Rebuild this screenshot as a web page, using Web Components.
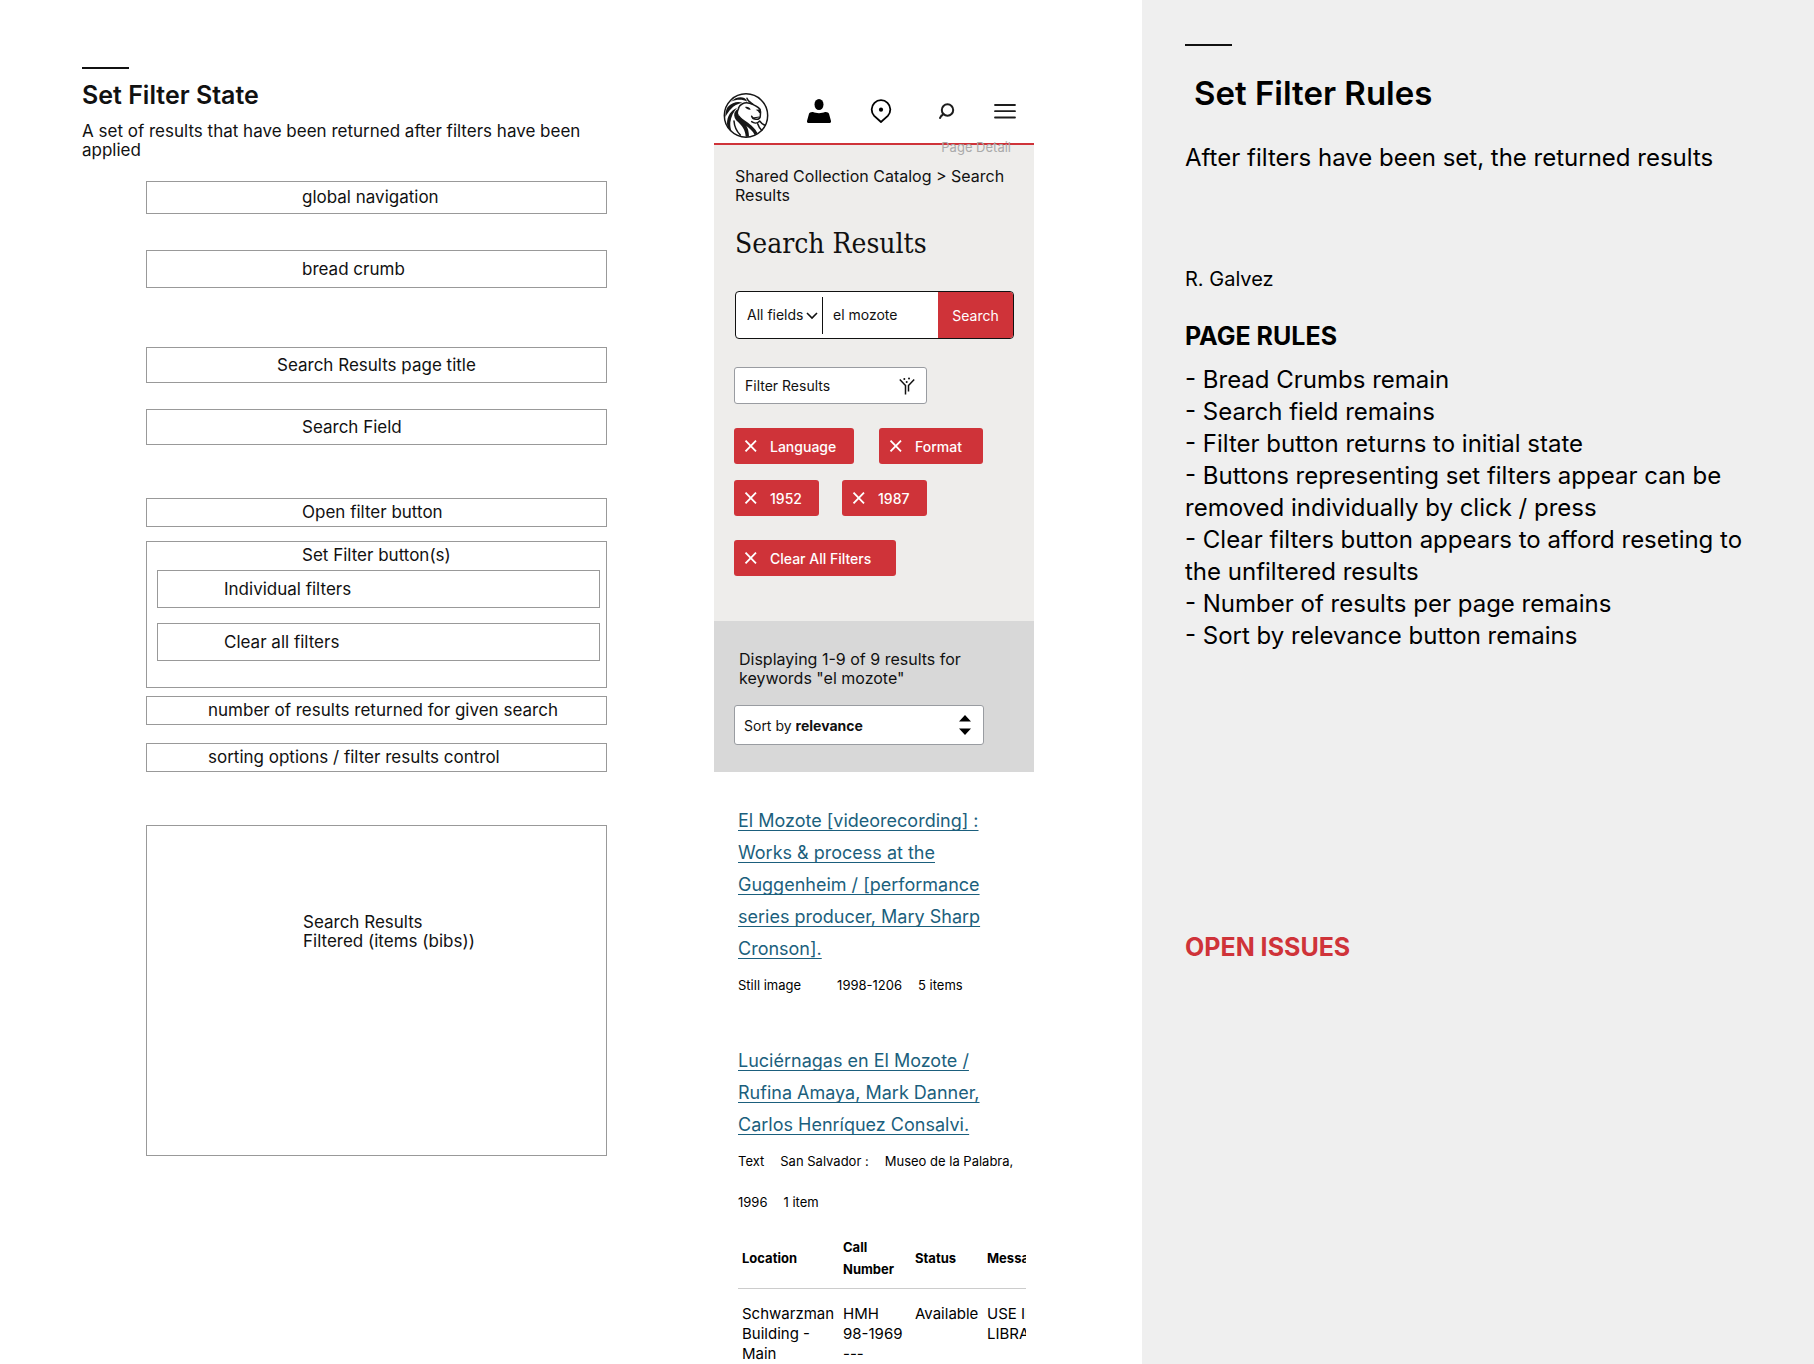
<!DOCTYPE html>
<html lang="en">
<head>
<meta charset="utf-8">
<title>Set Filter State</title>
<style>
html,body{margin:0;background:#fff}
body{font-family:Inter,"Liberation Sans",sans-serif;color:#111}
</style>
</head>
<body>
<spec-page>
  <state-panel>
    <span slot="title">Set Filter State</span>
    <span slot="intro">A set of results that have been returned after filters have been applied</span>
    <wire-box style="--h:33px;--gap:21px">global navigation</wire-box>
    <wire-box style="--h:38px;--gap:36px">bread crumb</wire-box>
    <wire-box style="--h:36px;--gap:59px;--indent:130px">Search Results page title</wire-box>
    <wire-box style="--h:36px;--gap:26px">Search Field</wire-box>
    <wire-box style="--h:29px;--gap:53px">Open filter button</wire-box>
    <wire-group>
      <span slot="label">Set Filter button(s)</span>
      <wire-box style="--h:38px;--gap:5px;--indent:66px">Individual filters</wire-box>
      <wire-box style="--h:38px;--gap:15px;--indent:66px">Clear all filters</wire-box>
    </wire-group>
    <wire-box style="--h:29px;--gap:8px;--indent:61px">number of results returned for given search</wire-box>
    <wire-box style="--h:29px;--gap:18px;--indent:61px">sorting options / filter results control</wire-box>
    <wire-box style="--h:331px;--gap:53px;--indent:156px;--align:flex-start;--top:87px">Search Results<br>Filtered (items (bibs))</wire-box>
  </state-panel>

  <phone-screen>
    <site-header></site-header>
    <search-hero></search-hero>
    <results-bar></results-bar>
    <result-list>
      <result-item>
        <span slot="title">El Mozote [videorecording] : Works &amp; process at the Guggenheim / [performance series producer, Mary Sharp Cronson].</span>
        <span slot="meta">Still image</span><span slot="meta" style="width:4px"></span><span slot="meta">1998-1206</span><span slot="meta">5 items</span>
      </result-item>
      <result-item>
        <span slot="title">Luciérnagas en El Mozote / Rufina Amaya, Mark Danner, Carlos Henríquez Consalvi.</span>
        <span slot="meta">Text</span><span slot="meta">San Salvador :</span><span slot="meta">Museo de la Palabra,</span><span slot="meta">1996</span><span slot="meta">1 item</span>
        <holdings-table></holdings-table>
      </result-item>
    </result-list>
  </phone-screen>

  <rules-panel></rules-panel>
</spec-page>

<script>
const define = (name, html) => {
  const t = document.createElement('template');
  t.innerHTML = '<style>*{box-sizing:border-box}:host{display:block;box-sizing:border-box}h1,h2,h3,p,ul{margin:0;padding:0}</style>' + html;
  customElements.define(name, class extends HTMLElement {
    constructor() {
      super();
      this.attachShadow({ mode: 'open' }).append(t.content.cloneNode(true));
    }
  });
};

define('spec-page', `
<style>
:host{display:grid;grid-template-columns:714fr 320px 108fr 672fr;min-height:100vh}
::slotted(rules-panel){grid-column:4}
</style><slot></slot>`);

define('state-panel', `
<style>
:host{padding:67px 107px 0 82px}
.rule{width:47px;height:2px;background:#111}
h1{font-size:25px;line-height:32px;font-weight:600;margin-top:10px}
p{font-size:17px;line-height:19px;margin-top:11px}
.boxes{margin-left:64px}
</style>
<div class="rule"></div>
<h1><slot name="title"></slot></h1>
<p><slot name="intro"></slot></p>
<div class="boxes"><slot></slot></div>`);

define('wire-box', `
<style>
:host{display:flex;align-items:var(--align,center);min-height:var(--h);margin-top:var(--gap);padding:var(--top,0) 0 0 var(--indent,155px);border:1px solid #999;font-size:17px;line-height:19px}
</style><div><slot></slot></div>`);

define('wire-group', `
<style>
:host{border:1px solid #999;margin-top:14px;padding:4px 6px 26px 10px;font-size:17px;line-height:19px}
.label{padding-left:145px}
</style><div class="label"><slot name="label"></slot></div><slot></slot>`);

define('phone-screen', `<style>:host{min-width:0;display:flex;flex-direction:column}</style><slot></slot>`);

define('site-header', `
<style>
:host{position:relative;border-bottom:2px solid #cf3339;padding:93px 17px 5px 9px}
header{display:flex;align-items:flex-start;gap:38px}
nav{flex:1;display:flex;justify-content:space-between;align-items:center;height:36px}
a{display:block;color:#000;height:24px}
.logo{height:45px}
svg{display:block}
.note{position:absolute;right:23px;bottom:-11px;font-size:13px;line-height:14px;color:#aaa}
</style>
<header>
<a class="logo" href="#" aria-label="Library home">
<svg width="46" height="45" viewBox="0 0 138 135" fill="none" stroke="#161616" stroke-linecap="round" stroke-linejoin="round">
<circle cx="69" cy="67.500" r="65" stroke-width="4.500"/>
<g fill="#161616" stroke="none">
<path d="M24 26C36 14 52 10 64 15C70 19 71 22 72 26C60 19 42 18 24 26Z"/>
<path d="M14 42C28 28 44 24 58 29C44 32 32 38 24 48C18 54 13 62 7 72C7 60 9 50 14 42Z"/>
<path d="M12 92C12 68 24 52 42 44C32 56 24 70 22 88C21 98 23 108 26 116C18 110 13 102 12 92Z"/>
<path d="M34 60C38 52 43 48 50 46C44 56 43 64 51 74C64 88 78 100 78 131L68 131C67 112 58 99 46 88C36 80 32 70 34 60Z"/>
<path d="M45 62C56 80 72 84 86 98C96 107 100 114 104 121L95 126C90 114 80 106 69 98C57 90 49 82 45 62Z"/>
<path d="M66 42C72 40 80 42 83 50C77 51 71 49 66 42Z"/>
<path d="M98 50L113 49L114 57L109 61L105 55Z"/>
</g>
<path d="M46 46C50 34 64 26 80 31C92 35 104 40 111 49C114 56 113 62 112 68C112 75 106 79 99 79C92 79 88 76 86 70" stroke-width="4.500"/>
<path d="M89 75L109 72" stroke-width="3.500"/>
<path d="M86 86C94 92 104 91 110 84C115 91 120 95 127 97" stroke-width="4.500"/>
<path d="M104 92C107 101 112 108 116 112M33 84C34 100 40 114 52 126" stroke-width="4.500"/>
<path d="M72 16C74 24 80 27 90 34" stroke-width="4.500"/>
</svg></a>
<nav>
<a href="#" aria-label="Account"><svg width="24" height="24" viewBox="0 0 24 24"><ellipse cx="12" cy="5.500" rx="4.500" ry="5.500"/><path d="M6 13C9 14.500 15 14.500 18 13C20 12.700 21.500 13.500 22 14.800L24 22C24.200 23.300 23.500 24 22.300 24H1.700C.5 24-.2 23.300 0 22L2 14.800C2.500 13.500 4 12.700 6 13Z"/></svg></a>
<a href="#" aria-label="Locations"><svg width="24" height="24" viewBox="0 0 24 24" fill="none" stroke="#000" stroke-width="1.800"><path d="M12 23L5.200 16.800A9.300 9.300 0 1 1 18.800 16.800Z"/><circle cx="12" cy="10.700" r="2.100" fill="#000" stroke="none"/></svg></a>
<a href="#" aria-label="Search"><svg width="24" height="24" viewBox="0 0 24 24" fill="none" stroke="#1d1d1d" stroke-width="2" stroke-linecap="round"><circle cx="16.500" cy="11" r="5.700"/><path d="M12.500 15L11 16.500H10.500L9 19"/></svg></a>
<a href="#" aria-label="Menu"><svg width="24" height="24" viewBox="0 0 24 24" stroke="#1d1d1d" stroke-width="1.800" stroke-linecap="round"><path d="M2 6H22M2 12.200H22M2 18.500H22"/></svg></a>
</nav>
</header>
<span class="note">Page Detail</span>`);

define('search-hero', `
<style>
:host{background:#eeedeb;padding:22px 20px 45px 20px}
.crumb{font-size:16px;line-height:19px;padding-left:1px;max-width:272px}
h2{font:400 28px/36px "DejaVu Serif Condensed","DejaVu Serif",serif;margin-top:21px;padding-left:1px}
form{display:flex;height:48px;margin:29px 0 0 1px;border:1px solid #111;border-radius:4px;background:#fff;overflow:hidden;font-size:14px}
.scope{flex:none;display:flex;align-items:center;width:87px;padding-left:11px;position:relative}
.scope::after{content:"";position:absolute;right:0;top:5px;bottom:4px;width:1px;background:#111}
select{appearance:none;border:0;background:none;font:inherit;color:inherit;width:100%;padding:0;margin:0}
.scope svg{position:absolute;right:5px;top:20px;pointer-events:none}
.scope select,input{padding-bottom:2px}
input{flex:1;min-width:0;border:0;background:none;padding:0 0 2px 10px;font:inherit;color:inherit}
button{font:inherit;cursor:pointer}
.go{width:75px;border:0;padding:0;background:#cf3339;color:#fff}
.filter{display:flex;align-items:center;justify-content:space-between;width:193px;height:37px;margin-top:28px;padding:0 11px 0 10px;border:1px solid #999ca1;border-radius:3px;background:#fff;color:#111;font-size:14px}
.chips{display:flex;flex-wrap:wrap;gap:16px 25px;margin-top:24px}
.chips.years{gap:23px;margin-top:16px}
</style>
<nav class="crumb" aria-label="Breadcrumb">Shared Collection Catalog &gt; Search Results</nav>
<h2>Search Results</h2>
<form onsubmit="return false">
<div class="scope"><select aria-label="Search scope"><option>All fields</option></select>
<svg width="12" height="8" viewBox="0 0 12 8" fill="none" stroke="#111" stroke-width="1.600"><path d="M1 1L6 6L11 1"/></svg></div>
<input type="text" value="el mozote" aria-label="Keywords">
<button class="go">Search</button>
</form>
<button class="filter">Filter Results
<svg width="16" height="18" viewBox="0 0 16 18" fill="none" stroke="#111" stroke-width="1.500"><path d="M.8 2.500L6.500 8.500V17.500M15.200 2.500L9.500 8.500V14.500"/><g fill="#111" stroke="none"><circle cx="5.300" cy="2" r="1"/><circle cx="10" cy="1.500" r="1"/><circle cx="7.700" cy="5" r="1"/></g></svg></button>
<div class="chips"><filter-chip style="--w:120px">Language</filter-chip><filter-chip style="--w:104px">Format</filter-chip></div>
<div class="chips years"><filter-chip style="--w:85px">1952</filter-chip><filter-chip style="--w:85px">1987</filter-chip></div>
<div class="chips"><filter-chip style="--w:162px">Clear All Filters</filter-chip></div>`);

define('filter-chip', `
<style>
button{display:flex;align-items:center;gap:13px;width:var(--w);height:36px;padding:0 0 0 10px;border:0;border-radius:3px;background:#cf3339;color:#fff;font:500 14px Inter,sans-serif;white-space:nowrap;cursor:pointer}
</style>
<button><svg width="13" height="12" viewBox="0 0 13 12" stroke="#fff" stroke-width="1.800"><path d="M1.500 .6L12 11.400M12 .6L1.500 11.400"/></svg><span><slot></slot></span></button>`);

define('results-bar', `
<style>
:host{background:#d8d8d8;padding:29px 50px 27px 20px}
p{font-size:16px;line-height:19px;padding-left:5px;max-width:260px}
.sort{display:flex;align-items:center;gap:4px;height:40px;margin-top:17px;padding-left:9px;border:1px solid #999ca1;border-radius:3px;background:#fff;font-size:14px;position:relative}
select{flex:1;appearance:none;border:0;background:none;font:inherit;font-weight:700;color:inherit;padding:0;margin:0}
svg{position:absolute;right:12px;top:9px;pointer-events:none}
</style>
<p>Displaying 1-9 of 9 results for keywords "el mozote"</p>
<div class="sort"><label for="sort">Sort by</label><select id="sort"><option>relevance</option></select>
<svg width="12" height="20" viewBox="0 0 12 20"><path d="M0 6.500L6 0L12 6.500ZM0 13.500L6 20L12 13.500Z"/></svg></div>`);

define('result-list', `<style>:host{display:flex;flex-direction:column;gap:39px;padding:33px 8px 0 24px}</style><slot></slot>`);

define('result-item', `
<style>
h3{font-size:18px;line-height:32px;font-weight:400;max-width:256px}
a{color:#1b5f7d;text-decoration:underline;text-decoration-thickness:1px;text-underline-offset:3px;text-decoration-skip-ink:none}
.meta{display:flex;flex-wrap:wrap;column-gap:16px;font-size:13px;line-height:41px;color:#000}
</style>
<h3><a href="#"><slot name="title"></slot></a></h3>
<div class="meta"><slot name="meta"></slot></div>
<slot></slot>`);

define('holdings-table', `
<style>
:host{overflow:hidden;margin-top:5px;color:#000}
table{table-layout:fixed;width:345px;border-collapse:collapse;text-align:left}
th{font-size:13px;line-height:22px;font-weight:700;padding:8px 0 8px 4px;border-bottom:1px solid #ccc}
td{font-size:15px;line-height:20px;vertical-align:top;padding:15px 0 0 4px}
</style>
<table>
<colgroup><col style="width:101px"><col style="width:72px"><col style="width:72px"><col></colgroup>
<thead><tr><th>Location</th><th>Call Number</th><th>Status</th><th>Message</th></tr></thead>
<tbody><tr><td>Schwarzman Building - Main</td><td>HMH<br>98-1969<br>---</td><td>Available</td><td>USE IN LIBRARY</td></tr></tbody>
</table>`);

define('rules-panel', `
<style>
:host{background:#efefef;padding:44px 43px 0;color:#000}
.rule{width:47px;height:2px;background:#111}
h1{font-size:33px;line-height:40px;font-weight:600;margin-top:27px;padding-left:9px}
.lead{font-size:24px;line-height:32px;margin-top:29px}
.author{font-size:20px;line-height:24px;margin-top:93px}
h2{font-size:25px;line-height:32px;font-weight:700;margin-top:29px}
ul{list-style:none;font-size:24px;line-height:32px;margin-top:12px}
.issues{color:#cf3339;margin-top:279px}
</style>
<div class="rule"></div>
<h1>Set Filter Rules</h1>
<p class="lead">After filters have been set, the returned results</p>
<p class="author">R. Galvez</p>
<h2>PAGE RULES</h2>
<ul>
<li>- Bread Crumbs remain</li>
<li>- Search field remains</li>
<li>- Filter button returns to initial state</li>
<li>- Buttons representing set filters appear can be removed individually by click / press</li>
<li>- Clear filters button appears to afford reseting to the unfiltered results</li>
<li>- Number of results per page remains</li>
<li>- Sort by relevance button remains</li>
</ul>
<h2 class="issues">OPEN ISSUES</h2>`);
</script>
</body>
</html>
